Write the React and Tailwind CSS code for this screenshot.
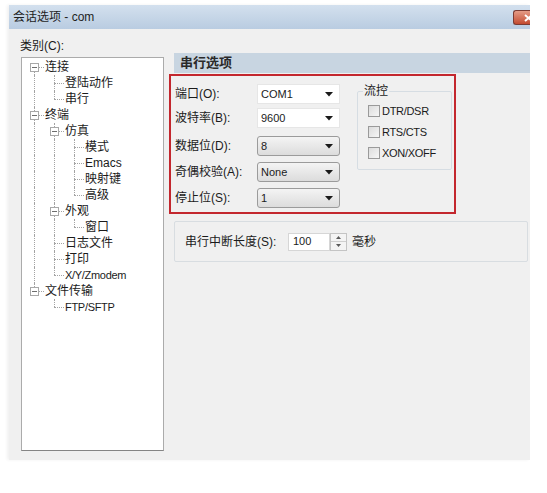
const FONT = "font-['Liberation_Sans','Noto_Sans_CJK_SC',sans-serif]";

// tree rows: depth, guides = ancestor columns that keep a vertical line,
// first/last decide whether the connector runs up / down
const rows = [
  { label: "连接", depth: 0, guides: [], first: true, expander: true },
  { label: "登陆动作", depth: 1, guides: [true] },
  { label: "串行", depth: 1, guides: [true], last: true },
  { label: "终端", depth: 0, guides: [], expander: true },
  { label: "仿真", depth: 1, guides: [true], expander: true },
  { label: "模式", depth: 2, guides: [true, true] },
  { label: "Emacs", depth: 2, guides: [true, true] },
  { label: "映射键", depth: 2, guides: [true, true] },
  { label: "高级", depth: 2, guides: [true, true], last: true },
  { label: "外观", depth: 1, guides: [true], expander: true },
  { label: "窗口", depth: 2, guides: [true, true], last: true },
  { label: "日志文件", depth: 1, guides: [true] },
  { label: "打印", depth: 1, guides: [true] },
  { label: "X/Y/Zmodem", depth: 1, guides: [true], last: true, small: true },
  { label: "文件传输", depth: 0, guides: [], last: true, expander: true },
  { label: "FTP/SFTP", depth: 1, guides: [false], last: true, small: true },
];

function TreeRow({ row }) {
  return (
    <div className="flex h-[16px] items-center">
      {row.guides.map((on, i) => (
        <div key={i} className="relative h-full w-[20px] shrink-0">
          {on && (
            <div className="absolute left-[10px] top-0 h-full border-l border-dotted border-[#a3a3a3]" />
          )}
        </div>
      ))}
      <div className="relative h-full w-[20px] shrink-0">
        {!row.first && (
          <div className="absolute left-[10px] top-0 h-[8px] border-l border-dotted border-[#a3a3a3]" />
        )}
        {!row.last && (
          <div className="absolute left-[10px] top-[8px] h-[8px] border-l border-dotted border-[#a3a3a3]" />
        )}
        <div className="absolute left-[10px] top-[8px] w-[10px] border-t border-dotted border-[#a3a3a3]" />
        {row.expander && (
          <div className="absolute left-[6px] top-[4px] flex h-[9px] w-[9px] items-center justify-center border border-[#a8a8a8] bg-white">
            <div className="h-px w-[5px] bg-[#6e6e6e]" />
          </div>
        )}
      </div>
      <span
        className={`ml-px whitespace-nowrap leading-[16px] text-[#1b1b1b] ${
          row.small ? "text-[11px] tracking-[-0.3px]" : "text-[12px]"
        }`}
      >
        {row.label}
      </span>
    </div>
  );
}

function Arrow() {
  return (
    <svg width="8" height="5" viewBox="0 0 8 5" className="shrink-0">
      <path d="M0 0h8L4 4.5z" fill="#1a1a1a" />
    </svg>
  );
}

function Combo({ value, flat }) {
  return (
    <div
      className={`flex h-[20px] w-[83px] items-center justify-between pl-[3px] pr-[6px] text-[11px] text-[#1b1b1b] ${
        flat
          ? "border border-[#e6e6e6] bg-white"
          : "rounded-[3px] border border-[#9b9b9b] bg-gradient-to-b from-[#f4f4f4] to-[#dcdcdc]"
      }`}
    >
      <span>{value}</span>
      <Arrow />
    </div>
  );
}

function Check({ label, className = "" }) {
  return (
    <div className={`flex h-[16px] items-center ${className}`}>
      <div className="h-[12px] w-[12px] border border-[#9a9a9a] bg-gradient-to-br from-[#dcdcdc] to-[#f6f6f6]" />
      <span className="ml-[2px] text-[11px] tracking-[-0.3px] text-[#1b1b1b]">{label}</span>
    </div>
  );
}

export default function App() {
  const fields = [
    { label: "端口(O):", value: "COM1", flat: true, mt: "mt-0" },
    { label: "波特率(B):", value: "9600", flat: true, mt: "mt-[4px]" },
    { label: "数据位(D):", value: "8", mt: "mt-[8px]" },
    { label: "奇偶校验(A):", value: "None", mt: "mt-[6px]" },
    { label: "停止位(S):", value: "1", mt: "mt-[6px]" },
  ];

  return (
    <div className={`h-[493px] w-[547px] bg-white pl-[9px] pt-[5px] ${FONT}`}>
      <div className="flex h-[455px] w-[521px] flex-col shadow-[-2px_0_3px_rgba(0,0,0,0.06)]">
        {/* title bar */}
        <div className="flex h-[24px] items-center bg-gradient-to-b from-[#d3e0ee] to-[#b9cce1] pl-[4px]">
          <span className="text-[12px] text-[#1e1e1e]">会话选项 - com</span>
          {/* close button, clipped at the right edge */}
          <div className="ml-auto mt-[1px] flex h-[15px] w-[17px] items-center justify-end overflow-hidden rounded-l-[3px] border border-r-0 border-[#7a3b33] bg-gradient-to-b from-[#e49b86] to-[#c2492f]">
            <svg width="9" height="8" viewBox="0 0 9 8" className="-mr-[3px] shrink-0">
              <path d="M1 1l7 6M8 1L1 7" stroke="#fff" strokeWidth="2" />
            </svg>
          </div>
        </div>

        {/* body */}
        <div className="flex flex-1 bg-[#f0f0f0] pl-[12px]">
          {/* category tree */}
          <div className="w-[143px]">
            <div className="-ml-px pt-[9px] text-[12px] leading-[16px] text-[#1b1b1b]">类别(C):</div>
            <div className="mt-[3px] h-[394px] border border-[#ababab] border-b-[#858585] bg-white pl-[2px] pt-px">
              {rows.map((r) => (
                <TreeRow key={r.label} row={r} />
              ))}
            </div>
          </div>

          {/* serial options */}
          <div className="ml-[5px] flex flex-col">
            <div className="ml-[5px] mt-[24px] flex h-[20px] w-[356px] items-center bg-[#c8d5e1] pl-[6px] text-[13px] font-bold text-[#2a2a2a]">
              串行选项
            </div>

            <div className="mt-px flex h-[140px] w-[287px] border-2 border-[#c3272e]">
              <div className="pl-[4px] pt-[8px]">
                {fields.map((f) => (
                  <div key={f.label} className={`flex h-[20px] items-center ${f.mt}`}>
                    <span className="w-[82px] text-[12px] text-[#1b1b1b]">{f.label}</span>
                    <Combo value={f.value} flat={f.flat} />
                  </div>
                ))}
              </div>

              <fieldset className="ml-[17px] mt-[7px] h-[87px] w-[95px] rounded-[2px] border border-[#d6dde3] pl-[10px]">
                <legend className="-ml-[5px] px-px text-[12px] leading-[16px] text-[#1b1b1b]">流控</legend>
                <Check label="DTR/DSR" className="mt-[4px]" />
                <Check label="RTS/CTS" className="mt-[5px]" />
                <Check label="XON/XOFF" className="mt-[5px]" />
              </fieldset>
            </div>

            <div className="ml-[5px] mt-[7px] flex h-[41px] w-[354px] items-center rounded-[2px] border border-[#d8dde1] pl-[10px]">
              <span className="w-[103px] text-[12px] text-[#1b1b1b]">串行中断长度(S):</span>
              <div className="flex h-[18px] w-[42px] items-center border border-[#d6d6d6] bg-white pl-[4px] text-[11px] text-[#1b1b1b]">
                100
              </div>
              <div className="flex h-[18px] w-[17px] flex-col border border-[#c4c4c4] bg-[#f4f4f4]">
                <div className="flex flex-1 items-center justify-center border-b border-[#cfcfcf]">
                  <svg width="5" height="3" viewBox="0 0 5 3">
                    <path d="M0 3h5L2.5 0z" fill="#5a5a5a" />
                  </svg>
                </div>
                <div className="flex flex-1 items-center justify-center">
                  <svg width="5" height="3" viewBox="0 0 5 3">
                    <path d="M0 0h5L2.5 3z" fill="#5a5a5a" />
                  </svg>
                </div>
              </div>
              <span className="ml-[5px] text-[12px] text-[#1b1b1b]">毫秒</span>
            </div>
          </div>
        </div>
      </div>
    </div>
  );
}
